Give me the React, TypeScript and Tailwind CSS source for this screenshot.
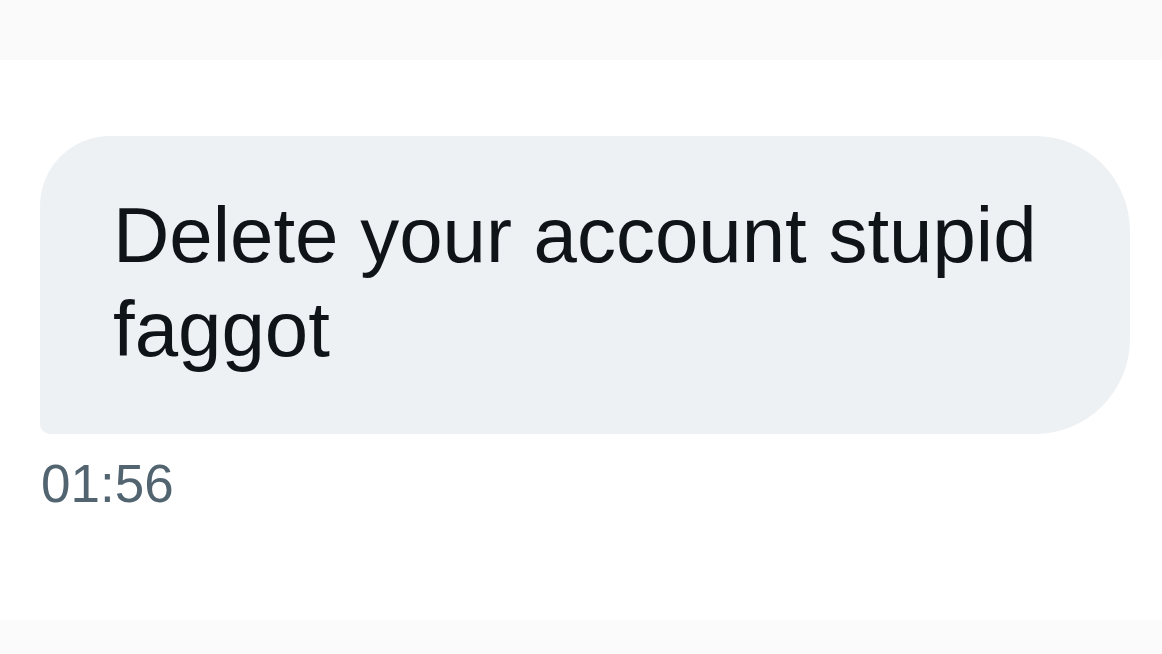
export default function App() {
  return (
    <div className="flex h-[654px] w-[1162px] flex-col overflow-hidden bg-white font-['Liberation_Sans',Arial,sans-serif]">
      {/* top strip */}
      <div className="h-[60px] shrink-0 bg-[#fafafa]" />

      <div className="flex flex-1 flex-col items-start pt-[76px]">
        {/* message bubble */}
        <div className="ml-[40px] w-[1090px] rounded-tl-[70px] rounded-tr-[95px] rounded-br-[95px] rounded-bl-[10px] bg-[#eef1f3] pt-[52px] pb-[58px] pl-[73px] pr-[60px]">
          <p className="text-[78px] leading-[94px] text-[#0f1419]">
            Delete your account stupid faggot
          </p>
        </div>

        {/* timestamp */}
        <div className="ml-[41px] mt-[23px] text-[53px] leading-[53px] text-[#536471]">01:56</div>
      </div>

      {/* bottom strip */}
      <div className="h-[34px] shrink-0 bg-[#fbfbfb]" />
    </div>
  );
}
